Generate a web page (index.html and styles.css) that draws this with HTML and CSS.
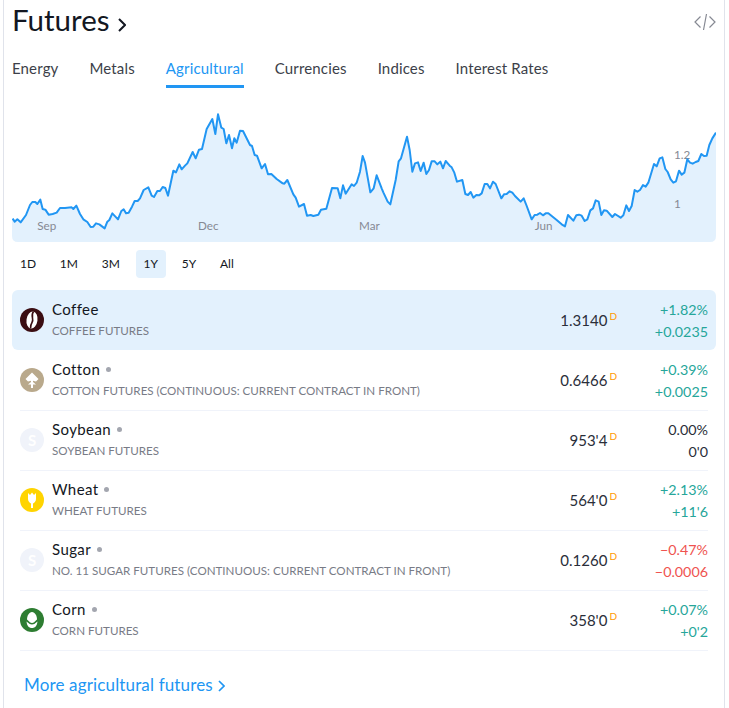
FILE: index.html
```html
<!DOCTYPE html>
<html lang="en">
<head>
<meta charset="UTF-8" />
<title>Futures</title>
<link rel="stylesheet" href="styles.css">
</head>
<body>
  <div class="widget">
    <div class="header">
      <h1 class="title">Futures<svg class="chev" viewBox="0 0 8 14" aria-hidden="true"><path d="M1 1 7 7 1 13" /></svg></h1>
      <svg class="embed-icon" viewBox="0 0 22 18" aria-hidden="true">
        <path d="M6.500 3.500 1 9l5.500 5.500M15.500 3.500 21 9l-5.500 5.500M12.500 1 9.500 17" />
      </svg>
    </div>

    <div class="tabs">
      <a class="tab">Energy</a>
      <a class="tab">Metals</a>
      <a class="tab active">Agricultural</a>
      <a class="tab">Currencies</a>
      <a class="tab">Indices</a>
      <a class="tab">Interest Rates</a>
    </div>

    <!-- viewBox is 3x the page pixels -->
    <svg class="chart" viewBox="36 0 2112 426" aria-label="Coffee futures, one year">
      <path class="area" d="M38,356 L44,365 52,358 62,367 78,345 90,315 97,306 106,306 112,312 121,299 128,327 136,329 146,344 158,342 170,338 180,324 195,324 215,322 220,327 229,317 240,342 250,358 262,366 272,381 280,380 288,370 298,373 314,385 322,365 328,360 337,340 354,358 364,333 371,328 378,340 386,338 396,320 404,303 413,303 420,295 431,270 445,262 455,287 462,291 472,273 480,273 488,261 496,264 504,287 520,212 528,217 538,193 545,208 555,197 562,190 578,156 587,175 597,149 606,147 620,87 637,57 646,102 654,43 664,83 671,87 679,130 687,105 696,145 703,115 710,128 720,92 729,93 750,135 756,138 764,165 771,167 785,205 795,192 804,223 814,222 830,237 848,250 853,251 862,240 880,283 887,293 897,320 912,312 921,347 932,345 940,348 955,344 963,329 979,326 996,264 1013,265 1021,295 1029,256 1037,281 1055,253 1062,258 1070,248 1080,215 1088,168 1095,188 1111,277 1121,265 1130,226 1145,265 1150,277 1163,305 1171,313 1187,240 1196,184 1203,175 1221,110 1229,150 1237,215 1245,190 1254,187 1262,213 1271,188 1279,222 1287,210 1295,184 1304,184 1312,193 1321,185 1329,205 1337,183 1349,197 1355,202 1363,218 1371,245 1387,240 1396,282 1404,285 1412,276 1420,293 1429,285 1437,286 1445,280 1454,252 1462,252 1470,265 1479,245 1487,252 1504,295 1512,283 1520,282 1529,274 1537,278 1545,288 1562,305 1571,295 1579,315 1595,358 1604,345 1612,344 1620,339 1629,346 1637,340 1645,340 1670,360 1685,373 1695,379 1704,345 1720,362 1729,346 1737,344 1745,347 1754,363 1762,358 1771,331 1779,325 1787,301 1796,305 1804,345 1812,331 1820,332 1837,351 1845,342 1862,353 1870,346 1879,316 1887,333 1895,318 1904,270 1912,275 1920,270 1929,255 1937,260 1945,248 1962,192 1970,199 1979,175 1987,172 1996,207 2003,216 2012,238 2020,248 2028,244 2037,212 2045,224 2053,218 2062,178 2070,188 2078,191 2087,186 2095,183 2104,162 2112,168 2120,167 2128,135 2137,115 2148,98 V408 Q2148,426 2130,426 H54 Q36,426 36,408 V356 Z" />
      <text class="axis" x="112" y="390">Sep</text>
      <text class="axis" x="594" y="390">Dec</text>
      <text class="axis" x="1077" y="390">Mar</text>
      <text class="axis" x="1604" y="390">Jun</text>
      <text class="axis" x="2022" y="176">1.2</text>
      <text class="axis" x="2022" y="323">1</text>
      <path class="line" d="M38,356 L44,365 52,358 62,367 78,345 90,315 97,306 106,306 112,312 121,299 128,327 136,329 146,344 158,342 170,338 180,324 195,324 215,322 220,327 229,317 240,342 250,358 262,366 272,381 280,380 288,370 298,373 314,385 322,365 328,360 337,340 354,358 364,333 371,328 378,340 386,338 396,320 404,303 413,303 420,295 431,270 445,262 455,287 462,291 472,273 480,273 488,261 496,264 504,287 520,212 528,217 538,193 545,208 555,197 562,190 578,156 587,175 597,149 606,147 620,87 637,57 646,102 654,43 664,83 671,87 679,130 687,105 696,145 703,115 710,128 720,92 729,93 750,135 756,138 764,165 771,167 785,205 795,192 804,223 814,222 830,237 848,250 853,251 862,240 880,283 887,293 897,320 912,312 921,347 932,345 940,348 955,344 963,329 979,326 996,264 1013,265 1021,295 1029,256 1037,281 1055,253 1062,258 1070,248 1080,215 1088,168 1095,188 1111,277 1121,265 1130,226 1145,265 1150,277 1163,305 1171,313 1187,240 1196,184 1203,175 1221,110 1229,150 1237,215 1245,190 1254,187 1262,213 1271,188 1279,222 1287,210 1295,184 1304,184 1312,193 1321,185 1329,205 1337,183 1349,197 1355,202 1363,218 1371,245 1387,240 1396,282 1404,285 1412,276 1420,293 1429,285 1437,286 1445,280 1454,252 1462,252 1470,265 1479,245 1487,252 1504,295 1512,283 1520,282 1529,274 1537,278 1545,288 1562,305 1571,295 1579,315 1595,358 1604,345 1612,344 1620,339 1629,346 1637,340 1645,340 1670,360 1685,373 1695,379 1704,345 1720,362 1729,346 1737,344 1745,347 1754,363 1762,358 1771,331 1779,325 1787,301 1796,305 1804,345 1812,331 1820,332 1837,351 1845,342 1862,353 1870,346 1879,316 1887,333 1895,318 1904,270 1912,275 1920,270 1929,255 1937,260 1945,248 1962,192 1970,199 1979,175 1987,172 1996,207 2003,216 2012,238 2020,248 2028,244 2037,212 2045,224 2053,218 2062,178 2070,188 2078,191 2087,186 2095,183 2104,162 2112,168 2120,167 2128,135 2137,115 2148,98" />
    </svg>

    <div class="ranges">
      <span class="range">1D</span>
      <span class="range">1M</span>
      <span class="range">3M</span>
      <span class="range active">1Y</span>
      <span class="range">5Y</span>
      <span class="range">All</span>
    </div>

    <div class="rows">
      <div class="row selected">
        <svg class="logo" viewBox="0 0 24 24" aria-hidden="true">
          <circle cx="12" cy="12" r="12" fill="#3a0d12" />
          <ellipse cx="12" cy="12" rx="5.500" ry="8.500" fill="#fff" transform="rotate(8 12 12)" />
          <path d="M13.500 3.500C10 8 14.500 11 12 14.500c-1 1.500-1.500 3-1.500 6" fill="none" stroke="#3a0d12" stroke-width="1.600" />
        </svg>
        <div class="info">
          <div class="name">Coffee</div>
          <div class="desc">COFFEE FUTURES</div>
        </div>
        <div class="price">1.3140<sup class="delay">D</sup></div>
        <div class="change up"><span>+1.82%</span><span>+0.0235</span></div>
      </div>

      <div class="row">
        <svg class="logo" viewBox="0 0 24 24" aria-hidden="true">
          <circle cx="12" cy="12" r="12" fill="#b9a98c" />
          <path d="M12 4.500 18.500 11 16 13.500 13 12.800V14l3 2.500H13V20H11V16.500H8L11 14V12.800L8 13.500 5.500 11Z" fill="#fff" />
        </svg>
        <div class="info">
          <div class="name">Cotton<i class="dot"></i></div>
          <div class="desc">COTTON FUTURES (CONTINUOUS: CURRENT CONTRACT IN FRONT)</div>
        </div>
        <div class="price">0.6466<sup class="delay">D</sup></div>
        <div class="change up"><span>+0.39%</span><span>+0.0025</span></div>
      </div>

      <div class="row">
        <span class="logo letter">S</span>
        <div class="info">
          <div class="name">Soybean<i class="dot"></i></div>
          <div class="desc">SOYBEAN FUTURES</div>
        </div>
        <div class="price">953'4<sup class="delay">D</sup></div>
        <div class="change flat"><span>0.00%</span><span>0'0</span></div>
      </div>

      <div class="row">
        <svg class="logo" viewBox="0 0 24 24" aria-hidden="true">
          <circle cx="12" cy="12" r="12" fill="#ffd400" />
          <path d="M8 5 10 7 12 4.500 14 7 16 5V11C16 13.500 14 15 13 15.500V20H11V15.500C10 15 8 13.500 8 11Z" fill="#fff" />
        </svg>
        <div class="info">
          <div class="name">Wheat<i class="dot"></i></div>
          <div class="desc">WHEAT FUTURES</div>
        </div>
        <div class="price">564'0<sup class="delay">D</sup></div>
        <div class="change up"><span>+2.13%</span><span>+11'6</span></div>
      </div>

      <div class="row">
        <span class="logo letter">S</span>
        <div class="info">
          <div class="name">Sugar<i class="dot"></i></div>
          <div class="desc">NO. 11 SUGAR FUTURES (CONTINUOUS: CURRENT CONTRACT IN FRONT)</div>
        </div>
        <div class="price">0.1260<sup class="delay">D</sup></div>
        <div class="change down"><span>−0.47%</span><span>−0.0006</span></div>
      </div>

      <div class="row">
        <svg class="logo" viewBox="0 0 24 24" aria-hidden="true">
          <circle cx="12" cy="12" r="12" fill="#2e7d32" />
          <path d="M12 4C9 4 7 8 7 11.500 9.500 14 10.500 15 12 15S14.500 14 17 11.500C17 8 15 4 12 4Z" fill="#fff" />
          <path d="M6.500 13.500Q9.500 16.500 12 16.500T17.500 13.500C17 18 15 20 12 20S7 18 6.500 13.500Z" fill="#fff" />
        </svg>
        <div class="info">
          <div class="name">Corn<i class="dot"></i></div>
          <div class="desc">CORN FUTURES</div>
        </div>
        <div class="price">358'0<sup class="delay">D</sup></div>
        <div class="change up"><span>+0.07%</span><span>+0'2</span></div>
      </div>
    </div>

    <a class="more">More agricultural futures<svg class="more-chev" viewBox="0 0 7 12" aria-hidden="true"><path d="M1 1 6 6 1 11" /></svg></a>
  </div>
</body>
</html>
```

FILE: styles.css
```css
html, body {
  margin: 0;
  height: 100%;
  overflow: hidden;
  background: #fff;
}

body {
  font-family: Lato, "Noto Sans", sans-serif;
  color: #131722;
}

.widget {
  box-sizing: border-box;
  width: 722px;
  height: 708px;
  margin-left: 3px;
  padding: 0 8px;
  background: #fff;
  border-left: 1px solid #e0e3eb;
  border-right: 1px solid #e0e3eb;
}

.header {
  display: flex;
  justify-content: space-between;
  align-items: center;
  height: 44px;
}

.title {
  margin: -4px 0 0;
  font-size: 29.500px;
  font-weight: 400;
  line-height: 44px;
}

.chev {
  width: 8px;
  height: 14px;
  margin-left: 8px;
  vertical-align: -1px;
  fill: none;
  stroke: #131722;
  stroke-width: 2;
}

.embed-icon {
  width: 22px;
  height: 18px;
  fill: none;
  stroke: #868993;
  stroke-width: 1.200;
}

.tabs {
  display: flex;
  gap: 31px;
  height: 44px;
  margin-bottom: 12px;
}

.tab {
  box-sizing: border-box;
  height: 44px;
  padding-top: 14px;
  font-size: 15px;
  line-height: 20px;
  letter-spacing: .15px;
  color: #3c3f49;
}

.tab.active {
  color: #2196f3;
  border-bottom: 3px solid #2196f3;
}

.chart {
  display: block;
  width: 704px;
  height: 142px;
}

.area {
  fill: #e3f1fd;
}

.line {
  fill: none;
  stroke: #2196f3;
  stroke-width: 6;
  stroke-linejoin: round;
}

.axis {
  font-size: 35px;
  fill: #868993;
}

.ranges {
  display: flex;
  gap: 7.750px;
  margin-top: 8px;
  margin-bottom: 12px;
}

.range {
  height: 28px;
  padding: 0 8px;
  border-radius: 4px;
  font-size: 12px;
  line-height: 28px;
}

.range.active {
  background: #e3f1fd;
}

.row {
  display: flex;
  align-items: center;
  box-sizing: border-box;
  height: 60px;
  margin: 0 8px;
  padding-bottom: 1px;
  border-bottom: 1px solid #f0f3fa;
}

.row.selected {
  margin: 0 0 1px;
  padding: 0 8px;
  background: #e3f1fd;
  border-bottom: none;
  border-radius: 6px;
}

.logo {
  flex: none;
  width: 24px;
  height: 24px;
  margin-right: 8px;
}

.logo.letter {
  border-radius: 50%;
  background: #f0f3fa;
  color: #fff;
  font-size: 15px;
  font-weight: 700;
  line-height: 24px;
  text-align: center;
}

.info {
  flex: 1;
  min-width: 0;
  margin-bottom: 1px;
}

.name {
  font-size: 15px;
  line-height: 20px;
  letter-spacing: .4px;
}

.dot {
  display: inline-block;
  width: 5px;
  height: 5px;
  margin-left: 6px;
  border-radius: 50%;
  background: #a3a6af;
  vertical-align: 3px;
}

.desc {
  margin-top: 3px;
  font-size: 11.600px;
  line-height: 18px;
  color: #787b86;
}

.price {
  font-size: 15px;
  white-space: nowrap;
  color: #2a2e39;
}

.delay {
  margin-left: 2px;
  font-size: 10px;
  color: #ff9800;
  vertical-align: 6px;
  line-height: 0;
}

.change {
  display: flex;
  flex-direction: column;
  align-items: flex-end;
  width: 91px;
  padding-top: 2px;
  font-size: 14.300px;
  line-height: 22px;
}

.up { color: #26a69a; }
.down { color: #ef5350; }
.flat { color: #2a2e39; }

.more {
  display: block;
  margin: 22px 0 0 12px;
  font-size: 17px;
  line-height: 24px;
  letter-spacing: .15px;
  color: #2196f3;
}

.more-chev {
  width: 7px;
  height: 12px;
  margin-left: 5px;
  vertical-align: -1px;
  fill: none;
  stroke: #2196f3;
  stroke-width: 1.700;
}
```
